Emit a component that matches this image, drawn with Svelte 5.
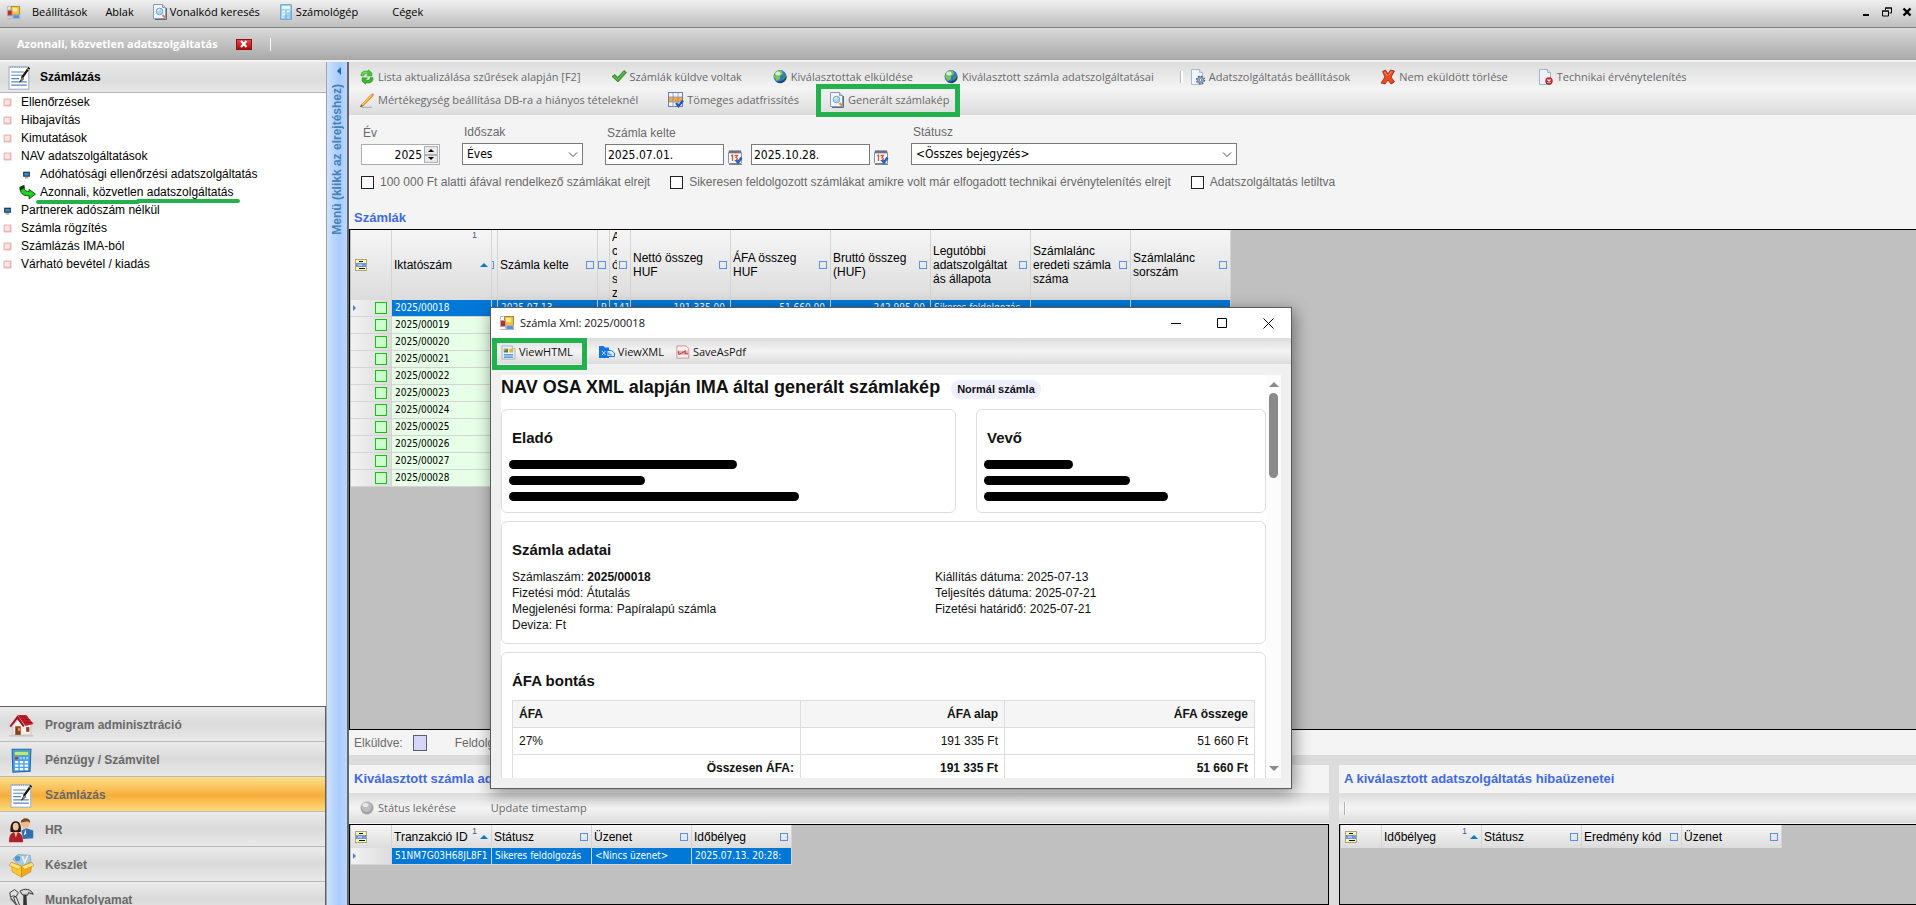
<script>
  const menu = [
    { label: 'Beállítások' },
    { label: 'Ablak' },
    { label: 'Vonalkód keresés', icon: 'search' },
    { label: 'Számológép', icon: 'calc' },
    { label: 'Cégek', wide: true }
  ];

  const tree = [
    { label: 'Ellenőrzések' },
    { label: 'Hibajavítás' },
    { label: 'Kimutatások' },
    { label: 'NAV adatszolgáltatások' },
    { label: 'Adóhatósági ellenőrzési adatszolgáltatás', icon: 'screen', sub: true },
    { label: 'Azonnali, közvetlen adatszolgáltatás', icon: 'arrow', sub: true, marked: true },
    { label: 'Partnerek adószám nélkül', icon: 'screen' },
    { label: 'Számla rögzítés' },
    { label: 'Számlázás IMA-ból' },
    { label: 'Várható bevétel / kiadás' }
  ];

  const modules = [
    { label: 'Program adminisztráció', icon: 'house' },
    { label: 'Pénzügy / Számvitel', icon: 'bluecalc' },
    { label: 'Számlázás', icon: 'notepad' },
    { label: 'HR', icon: 'people' },
    { label: 'Készlet', icon: 'box' },
    { label: 'Munkafolyamat', icon: 'tools' }
  ];
  let current = 'Számlázás';

  const toolbar = [
    [
      { label: 'Lista aktualizálása szűrések alapján [F2]', icon: 'refresh' },
      { label: 'Számlák küldve voltak', icon: 'check' },
      { label: 'Kiválasztottak elküldése', icon: 'globe' },
      { label: 'Kiválasztott számla adatszolgáltatásai', icon: 'globe' },
      { label: 'Adatszolgáltatás beállítások', icon: 'gear', split: true },
      { label: 'Nem eküldött törlése', icon: 'cross' },
      { label: 'Technikai érvénytelenítés', icon: 'docerror' }
    ],
    [
      { label: 'Mértékegység beállítása DB-ra a hiányos tételeknél', icon: 'pencil' },
      { label: 'Tömeges adatfrissítés', icon: 'gridcheck' },
      { label: 'Generált számlakép', icon: 'search', marked: true }
    ]
  ];

  const columns = [
    { label: 'Iktatószám', width: 100, sort: true },
    { label: '', width: 6 },
    { label: 'Számla kelte', width: 100 },
    { label: '', width: 12 },
    { label: 'Acósz', width: 21, narrow: true },
    { label: 'Nettó összeg HUF', width: 100 },
    { label: 'ÁFA összeg HUF', width: 100 },
    { label: 'Bruttó összeg (HUF)', width: 100 },
    { label: 'Legutóbbi adatszolgáltatás állapota', width: 100 },
    { label: 'Számlalánc eredeti számla száma', width: 100 },
    { label: 'Számlalánc sorszám', width: 100 }
  ];
  const first = ['2025/00018', '', '2025.07.13.', 'P', '141', '191 335,00', '51 660,00', '242 995,00', 'Sikeres feldolgozás', '', ''];
  const invoices = [19, 20, 21, 22, 23, 24, 25, 26, 27, 28].map(n => '2025/000' + n);
  const isAmount = i => i >= 5 && i <= 7;

  const transactionCols = ['Tranzakció ID', 'Státusz', 'Üzenet', 'Időbélyeg'];
  const transaction = ['51NM7G03H68JL8F1', 'Sikeres feldolgozás', '<Nincs üzenet>', '2025.07.13. 20:28:'];
  const errorCols = ['Időbélyeg', 'Státusz', 'Eredmény kód', 'Üzenet'];

  const parties = [
    { title: 'Eladó', lines: [228, 136, 290] },
    { title: 'Vevő', lines: [89, 146, 184] }
  ];

  let year = 2025;
</script>

{#snippet icon(name, size = 16)}
  <svg class="icon" width={size} height={size} viewBox="0 0 16 16" aria-hidden="true">
    {#if name === 'app'}
      <rect x="5.500" y="1.500" width="9" height="9" fill="#f4c430" stroke="#9a8a50" />
      <rect x="7" y="3" width="5" height="4" fill="#ffe98a" />
      <rect x="1.500" y="5.500" width="5" height="6" fill="#c62b22" stroke="#a9a9a9" />
      <path d="M1.500 1.500h3M1.500 1.500v3M1.500 14.500h5v-3" fill="none" stroke="#b5b5b5" />
      <rect x="7.500" y="10.500" width="7" height="4" fill="#5b8fe0" stroke="#a9b4c8" />
    {:else if name === 'search'}
      <path d="M1.500 .5h9l3 3v11h-12z" fill="#f2f6fc" stroke="#8a9abb" />
      <path d="M14.500 4v11.500H3" fill="none" stroke="#5c6b88" />
      <path d="M10.500 .5v3h3" fill="#c4d2ea" stroke="#8a9abb" />
      <circle cx="7.500" cy="7.500" r="3.300" fill="#a9daf5" stroke="#7b9fc8" />
      <path d="M5.500 7a2.300 2.300 0 0 1 2.500-1.500" stroke="#fff" fill="none" />
      <path d="M10.500 11l2.500 2.500" stroke="#e58a2e" stroke-width="2.200" />
    {:else if name === 'calc'}
      <path d="M2.500 .5h11v15h-11z" fill="#9ccfee" stroke="#7faccb" />
      <rect x="4" y="2" width="8" height="3" fill="#e4f5ff" />
      <path d="M4 7.500h3M9 7.500h3M4 10.500h3M9 10.500h3M4 13.500h3M9 13.500h3" stroke="#e8f6ff" stroke-width="1.800" />
      <path d="M2.500 15.500L13.500 6v9.500z" fill="#4fa0d8" opacity=".35" />
    {:else if name === 'notepad'}
      <rect x="1.300" y="1.200" width="12.600" height="14.300" fill="#fdfeff" stroke="#9fb3cc" stroke-width=".7" />
      <path d="M2 1.300h11.500" stroke="#7f90a8" stroke-dasharray=".7 .7" stroke-width=".8" />
      <path d="M2.700 4.500h8M2.700 6.600h7M2.700 8.700h5M2.700 10.800h10M2.700 12.900h10" stroke="#5d84b8" stroke-width=".7" />
      <path d="M14.200 1.700L9.500 8.200" stroke="#111" stroke-width="1.500" />
      <path d="M9.700 8L8 11l2.700-2z" fill="#e8b63a" stroke="#222" stroke-width=".5" />
      <path d="M12.800 2.300l1.500 1" stroke="#d8a825" stroke-width=".7" />
    {:else if name === 'refresh'}
      <path d="M2 7C1.500 3.500 4 1.500 8 2h1.500V.8L13 4v3H7.500l1.800-1.800C7 4.300 5 5 4.800 7z" fill="#4cc436" stroke="#2a9a24" stroke-width=".5" />
      <path d="M14 8.500c.5 4-2 5.800-6 5.500H6.500v1.300L3 12V8.800h5.500l-1.800 2c2.300 1 4.300.2 4.500-2.300z" fill="#3fb52c" stroke="#1f8a1c" stroke-width=".5" />
      <path d="M3 6c.3-2 2-3 5-2.800" fill="none" stroke="#9be78a" stroke-width=".8" />
    {:else if name === 'check'}
      <path d="M1 7.500l3-2 2.700 2.800L13 1.500l2.500 2L7 13z" fill="#3fa535" stroke="#2a7d24" stroke-width=".7" />
      <path d="M3 7.500l3.700 3L13.500 3" stroke="#6cc75c" fill="none" />
    {:else if name === 'globe'}
      <circle cx="8" cy="7.500" r="6.500" fill="#2f78c8" />
      <path d="M3 4c2-2.500 5-3 7-2l1 3-3 2v3l-3 2-3-4z" fill="#7cc553" />
      <path d="M11 8l3-1c.5 3-1 5-3 6z" fill="#4f9d3a" />
      <path d="M14.500 6.500a6.500 6.500 0 0 1-11 5.800c5 1.200 9-1 11-5.800z" fill="#0d2a5c" opacity=".7" />
      <ellipse cx="6" cy="4.500" rx="2.700" ry="1.900" fill="#e9f7e9" opacity=".8" />
    {:else if name === 'gear'}
      <path d="M1.500 .5h8l3 3v12h-11z" fill="#f3f7fd" stroke="#a8bad2" />
      <path d="M9.500 .5v3h3" fill="#d4dfef" stroke="#a8bad2" />
      <circle cx="10.500" cy="11" r="3.900" fill="#c5d4e6" stroke="#4d6482" stroke-width="1.400" stroke-dasharray="1.600 1.460" />
      <circle cx="10.500" cy="11" r="3" fill="#b9cadf" stroke="#5b7392" stroke-width=".9" />
      <circle cx="10.500" cy="11" r="1.300" fill="#fff" stroke="#4d6482" stroke-width=".8" />
    {:else if name === 'cross'}
      <path d="M2.500 2.500L5.500 1 8 5l2.500-4 4 1L11 8l3.500 5-3.500 2L8 11l-3 4-4-1 4-6z" fill="#ee4a22" stroke="#8d2412" stroke-width=".8" />
      <path d="M4.500 3l3 4M11.500 2.500L9 6" stroke="#ff9a70" />
    {:else if name === 'docerror'}
      <path d="M1.500 .5h8l3 3v12h-11z" fill="#eef3fb" stroke="#9fb3cc" />
      <path d="M9.500 .5v3h3" fill="#d4dfef" stroke="#9fb3cc" />
      <circle cx="11" cy="12" r="3.700" fill="#b8262c" />
      <path d="M9.500 10.500l3 3M12.500 10.500l-3 3" stroke="#fff" stroke-width="1.400" />
    {:else if name === 'pencil'}
      <path d="M2.500 12.800L12 2.500l2 1.500L4 14.200z" fill="#f6a733" stroke="#c77a1c" stroke-width=".6" />
      <path d="M3.500 12.500L12.500 3" stroke="#ffd68a" stroke-width=".8" />
      <path d="M12 2.800l1.500-1.600L15.500 2.700 14 4.300z" fill="#e58c8c" />
      <path d="M2.300 12.800L.8 15 3.800 14.300z" fill="#4a3826" />
      <path d="M2 15.300h11" stroke="#9a9a9a" stroke-width=".8" />
    {:else if name === 'gridcheck'}
      <rect x=".5" y=".5" width="14" height="14" fill="#f4f7fd" stroke="#6a7fa8" />
      <rect x="1" y="5" width="13" height="5" fill="#f4a640" />
      <path d="M5 1v13M10 1v13M1 5h13M1 10h13" stroke="#8493b5" stroke-width=".8" />
      <path d="M8 11l2.500 3.200L15 8.500" fill="none" stroke="#1d55b8" stroke-width="2.200" />
    {:else if name === 'calendar'}
      <rect x="1.500" y="2.500" width="13" height="12" rx="1" fill="#fafcff" stroke="#7c8fb4" />
      <path d="M2 2.500h12v2H2z" fill="#8e9dbb" />
      <path d="M3 1v3M5 1v3M7 1v3M9 1v3M11 1v3M13 1v3" stroke="#444" stroke-width=".9" />
      <path d="M4 7l1.500-.8V12M7.500 6.500h3L9 8.700c2 0 2 3-1.500 3" fill="none" stroke="#e0552a" stroke-width="1.300" />
      <path d="M9 11l2 2.500 3.500-5" fill="none" stroke="#2560c2" stroke-width="2.400" />
      <path d="M2 15.300h13" stroke="#666" />
    {:else if name === 'screen'}
      <rect x="2" y="3" width="12" height="9" fill="#23313d" />
      <rect x="4" y="5" width="8" height="5" fill="#2f8fd6" />
      <path d="M5 14h6" stroke="#8a8a8a" stroke-width="2" />
    {:else if name === 'pink'}
      <rect x="1" y="1" width="14" height="14" fill="#e8b4b4" />
      <rect x="3" y="3" width="9" height="9" fill="#fbe6e6" />
    {:else if name === 'arrow'}
      <path d="M1 3l3.500-1.500c0 4 1 5.500 5 5.500V5L15.500 9.500 9.500 14v-3C3.500 11.500 1 8.500 1 3z" fill="#21d321" stroke="#0a4d0a" stroke-width=".9" />
      <path d="M.5 3L5 1l.5 3L1 6z" fill="#0d3d0d" />
    {:else if name === 'house'}
      <path d="M2.500 8L6 4l8 3v7H2.500z" fill="#f1efec" stroke="#bdb6ae" stroke-width=".4" />
      <path d="M.3 8.500L5.500 1.500 7.500 4.500 10 8.300 9 9 5.300 4 1.300 9z" fill="#a31420" />
      <path d="M5.500 1.200h5.500L15.700 7l-5.200 1.300z" fill="#c81f2d" />
      <path d="M6.800 2.700h5.400M8 4.300h5.600M9 6h6" stroke="#7d0c16" stroke-width=".4" />
      <rect x="4" y="8.500" width="3.500" height="5.500" fill="#8a3f1e" />
      <rect x="5.800" y="9.500" width="1.200" height="2" fill="#e9a13a" />
      <rect x="11" y="9" width="2" height="3" fill="#8a3f1e" />
      <path d="M0 14.600h15.500" stroke="#c7c7c7" />
    {:else if name === 'bluecalc'}
      <path d="M2 .8h12l-.5 14L2.500 15.500z" fill="#4aa0e6" stroke="#1f66ad" stroke-width=".7" />
      <rect x="3.500" y="2.200" width="9" height="2.600" fill="#b9e88a" stroke="#4a8f34" stroke-width=".3" />
      <path d="M3.800 6.500h2" stroke="#d62a2a" stroke-width="1.500" />
      <path d="M6.800 6.500h5.600" stroke="#a8cdf0" stroke-width="1.500" stroke-dasharray="1.300 .8" />
      <path d="M3.800 9h8.600M3.800 11.300h8.600M3.800 13.500h8.600" stroke="#f3faff" stroke-width="1.500" stroke-dasharray="2.200 .9" />
    {:else if name === 'people'}
      <circle cx="10.500" cy="3.500" r="2.800" fill="#f0b98a" />
      <path d="M7.500 3c0-3.500 6-4 6.200 0-2-1.500-4-.5-6.200 0z" fill="#7b4a20" />
      <path d="M8 8l3-1.500L15.500 8v5L9 13.500z" fill="#2f6fae" />
      <path d="M10.500 7l-1 4 1.500-1z" fill="#fff" />
      <path d="M1 9c-.5-4 .5-7 3.300-7S8 5 7.500 9z" fill="#2a1712" />
      <ellipse cx="4.300" cy="5.500" rx="1.900" ry="2.500" fill="#f3c49c" />
      <path d="M0 15.500c0-5 1.500-6.500 4.300-6.500S9 10.500 9 15.500z" fill="#b0202c" />
      <path d="M3.300 9l1.100 3.500L5.500 9z" fill="#f3c49c" />
    {:else if name === 'box'}
      <path d="M2.500 4l3-3 8 .5.5 4-6 4z" fill="#a9c9df" stroke="#6f8ca2" stroke-width=".4" />
      <circle cx="5.500" cy="3.500" r="1.700" fill="#4d9ad0" />
      <path d="M8.500 2l1.500 4 2-4.500" stroke="#e9eef2" fill="none" />
      <path d="M1.500 6L8 8.500v7L2 12z" fill="#f9c733" stroke="#c98d13" stroke-width=".4" />
      <path d="M14.500 6L8 8.500v7l6-3.500z" fill="#f0a822" stroke="#c98d13" stroke-width=".4" />
      <path d="M1.500 6L0 8l6 2.500L8 8.500zM14.500 6L16 8l-6 2.500L8 8.500z" fill="#ffe27a" stroke="#c98d13" stroke-width=".4" />
    {:else if name === 'tools'}
      <path d="M7 2c3-2 7-1.500 8.500 2l-3-1-.5 1.500H8.800z" fill="#d9d9d9" stroke="#222" stroke-width=".6" />
      <path d="M9.200 4.500h2l.5 11.500H9z" fill="#333" />
      <path d="M.5 3l3-2 2.500 2-1.500 2.500-2-.5-1.500 1zM4.500 5.500L8 14l-2 1L3 6z" fill="#e2e2e2" stroke="#333" stroke-width=".6" />
      <path d="M1 6.500L6 12" stroke="#555" />
    {:else if name === 'sphere'}
      <circle cx="8" cy="8" r="6.500" fill="#a2a2a2" />
      <circle cx="7.500" cy="7" r="5" fill="#bdbdbd" />
      <ellipse cx="6.500" cy="5" rx="3" ry="2" fill="#e6e6e6" />
    {:else if name === 'html'}
      <path d="M1 1h11l3 3v11H1z" fill="#e8f2fa" stroke="#a2b4c4" />
      <path d="M12 1v3h3" fill="#fff" stroke="#a2b4c4" />
      <rect x="3" y="4" width="4.500" height="4" fill="#5c7f3c" />
      <rect x="3" y="4" width="2" height="2" fill="#e2b52c" />
      <rect x="9" y="4" width="4" height="4" fill="#e2b52c" />
      <path d="M3 10.500h10M3 13h10" stroke="#3f84c4" stroke-width="1.400" />
    {:else if name === 'xml'}
      <path d="M0 2h4.500l1.500 1.500H10V14H0z" fill="#1673e6" />
      <path d="M3 7l3.500 4M6.500 7L3 11" stroke="#cfe4ff" stroke-width=".9" />
      <path d="M8 6.500h4.500l3 2.500v3.500H8z" fill="#d8ebff" stroke="#1673e6" />
      <path d="M9.800 8.500v2.300h3" stroke="#1673e6" fill="none" />
    {:else if name === 'pdf'}
      <path d="M1 1h10.500l3 3v11H1z" fill="#fbeeee" stroke="#c88a8a" />
      <path d="M1 6.500h13.500v4.500H1z" fill="#e6b2b2" />
      <path d="M3 11c3.500-1.500 4.500-3 7.500-3.500M10.500 6v4h3" fill="none" stroke="#b84444" stroke-width="1.200" />
      <path d="M3 7v3" stroke="#b84444" stroke-width="1.200" />
    {/if}
  </svg>
{/snippet}

{#snippet corner()}
  <svg class="icon" width="12" height="12" viewBox="0 0 12 12" aria-hidden="true">
    <rect x=".5" y=".5" width="11" height="11" fill="#ffff9c" stroke="#a8a482" />
    <rect x="1" y="4" width="10" height="4" fill="#6f93f2" />
    <path d="M4 2.500h4M4 9.500h6" stroke="#111" />
    <path d="M3 6h4" stroke="#dfe8ff" />
  </svg>
{/snippet}

{#snippet smallGrid(cols, row)}
  <table class="data small">
    <colgroup>
      <col class="c-head" />
      {#each cols as col}<col class="c-std" />{/each}
    </colgroup>
    <thead>
      <tr>
        <th class="corner">{@render corner()}</th>
        {#each cols as col, i}
          <th>
            <div class="head">
              <span class="caption">{col}</span>
              {#if i === 0}
                <span class="order">1</span><span class="up"></span>
              {:else}
                <span class="pin"></span>
              {/if}
            </div>
          </th>
        {/each}
      </tr>
    </thead>
    {#if row}
      <tbody>
        <tr class="selected">
          <td class="row-head"><span class="pointer"></span></td>
          {#each row as value}<td>{value}</td>{/each}
        </tr>
      </tbody>
    {/if}
  </table>
{/snippet}

<div class="app">
  <header class="menubar">
    {@render icon('app', 15)}
    <nav>
      {#each menu as item}
        <button class:wide={item.wide}>
          {#if item.icon}{@render icon(item.icon)}{/if}{item.label}
        </button>
      {/each}
    </nav>
    <div class="mdi">
      <button aria-label="Kis méret"><svg width="10" height="10"><path d="M1 8h6" stroke="#000" stroke-width="2" /></svg></button>
      <button aria-label="Előző méret">
        <svg width="10" height="10"><path d="M3.500 3V1h6v5H7.500M3 1h7M.5 4h6v5h-6zM0 4h7" fill="none" stroke="#000" /></svg>
      </button>
      <button aria-label="Bezárás"><svg width="10" height="10"><path d="M1.500 1.500l7 7M8.500 1.500l-7 7" stroke="#000" stroke-width="2.400" /></svg></button>
    </div>
  </header>

  <div class="tabs">
    <span class="tab">Azonnali, közvetlen adatszolgáltatás</span>
    <button class="close-tab" aria-label="Lap bezárása">
      <svg width="8" height="8"><path d="M1 1l5.500 6M6.500 1L1 7" stroke="#fff" stroke-width="2" /></svg>
    </button>
    <span class="tab-end"></span>
  </div>

  <div class="body">
    <aside>
      <h2>{@render icon('notepad', 25)}Számlázás</h2>
      <ul class="tree">
        {#each tree as item}
          <li class:sub={item.sub} class:marked={item.marked}>
            {@render icon(item.icon || 'pink', item.icon === 'arrow' ? 17 : 9)}
            <a href="#tree">{item.label}</a>
            {#if item.marked}
              <svg class="underline" width="208" height="8" aria-hidden="true">
                <path d="M3 5h100M103 4h100" stroke="#22b14c" stroke-width="4" stroke-linecap="round" />
              </svg>
            {/if}
          </li>
        {/each}
      </ul>
      <div class="modules">
        {#each modules as item}
          <button class:active={current === item.label} on:click={() => (current = item.label)}>
            {@render icon(item.icon, 25)}{item.label}
          </button>
        {/each}
      </div>
    </aside>

    <button class="strip">
      <span class="left"></span>
      <span class="strip-text">Menü (klikk az elrejtéshez)</span>
    </button>

    <main>
      <div class="toolbar">
        {#each toolbar as row}
          <div class="tool-row">
            {#each row as item}
              <button class:split={item.split} class:marked={item.marked}>
                {@render icon(item.icon)}{item.label}
              </button>
            {/each}
          </div>
        {/each}
      </div>

      <section class="filters">
        <div class="fields">
          <div class="field">
            <label for="year">Év</label>
            <div class="spin">
              <input id="year" type="number" bind:value={year} />
              <div class="spin-buttons">
                <button aria-label="Növelés" on:click={() => year++}><span class="up"></span></button>
                <button aria-label="Csökkentés" on:click={() => year--}><span class="down"></span></button>
              </div>
            </div>
          </div>
          <div class="field">
            <label for="period">Időszak</label>
            <div class="select period">
              <select id="period"><option>Éves</option></select>
              <svg width="10" height="6"><path d="M1 .5l4 4 4-4" fill="none" stroke="#444" /></svg>
            </div>
          </div>
          <div class="field">
            <label for="from">Számla kelte</label>
            <div class="dates">
              <input id="from" type="text" value="2025.07.01." />
              <button aria-label="Naptár">{@render icon('calendar')}</button>
              <input aria-label="Számla kelte vége" type="text" value="2025.10.28." />
              <button aria-label="Naptár">{@render icon('calendar')}</button>
            </div>
          </div>
          <div class="field">
            <label for="status">Státusz</label>
            <div class="select status">
              <select id="status"><option>&lt;Összes bejegyzés&gt;</option></select>
              <svg width="10" height="6"><path d="M1 .5l4 4 4-4" fill="none" stroke="#444" /></svg>
            </div>
          </div>
        </div>
        <div class="checks">
          <label><input type="checkbox" />100 000 Ft alatti áfával rendelkező számlákat elrejt</label>
          <label><input type="checkbox" />Sikeresen feldolgozott számlákat amikre volt már elfogadott technikai érvénytelenítés elrejt</label>
          <label><input type="checkbox" />Adatszolgáltatás letiltva</label>
        </div>
        <h3>Számlák</h3>
      </section>

      <div class="grid-area">
        <table class="data invoices">
          <colgroup>
            <col class="c-head" />
            {#each columns as col}<col style="width: {col.width}px" />{/each}
          </colgroup>
          <thead>
            <tr>
              <th class="corner">{@render corner()}</th>
              {#each columns as col}
                <th>
                  <div class="head" class:narrow={col.narrow}>
                    {#if col.label}<span class="caption">{col.label}</span>{/if}
                    {#if col.sort}
                      <span class="order">1</span><span class="up"></span>
                    {:else}
                      <span class="pin"></span>
                    {/if}
                  </div>
                </th>
              {/each}
            </tr>
          </thead>
          <tbody>
            <tr class="selected">
              <td class="row-head"><span class="pointer"></span><input type="checkbox" aria-label="Kijelölés" /></td>
              {#each first as value, i}<td class:amount={isAmount(i)}>{value}</td>{/each}
            </tr>
            {#each invoices as number}
              <tr>
                <td class="row-head"><input type="checkbox" aria-label="Kijelölés" /></td>
                <td>{number}</td>
                {#each columns.slice(1) as col}<td></td>{/each}
              </tr>
            {/each}
          </tbody>
        </table>
      </div>

      <div class="legend">
        Elküldve:<span class="swatch"></span>Feldolgozva:
      </div>

      <div class="bottom">
        <section class="transactions">
          <h3>Kiválasztott számla adatszolgáltatásai</h3>
          <div class="tool-row">
            <button>{@render icon('sphere')}Státus lekérése</button>
            <button>Update timestamp</button>
          </div>
          <div class="grid-area">{@render smallGrid(transactionCols, transaction)}</div>
        </section>
        <section class="errors">
          <h3>A kiválasztott adatszolgáltatás hibaüzenetei</h3>
          <div class="tool-row"><span class="bar"></span></div>
          <div class="grid-area">{@render smallGrid(errorCols, null)}</div>
        </section>
      </div>
    </main>
  </div>

  <div class="dialog" role="dialog" aria-label="Számla Xml">
    <div class="title">
      {@render icon('app', 16)}
      <span>Számla Xml: 2025/00018</span>
      <button aria-label="Kis méret"><svg width="11" height="11"><path d="M0 5.500h10" stroke="#000" /></svg></button>
      <button aria-label="Teljes méret"><svg width="11" height="11"><path d="M.5 .5h9v9h-9z" fill="none" stroke="#000" /></svg></button>
      <button aria-label="Bezárás"><svg width="11" height="11"><path d="M.5 .5l10 10M10.500 .5l-10 10" stroke="#000" /></svg></button>
    </div>
    <div class="dialog-tools">
      <button class="marked">{@render icon('html', 15)}ViewHTML</button>
      <button>{@render icon('xml')}ViewXML</button>
      <button>{@render icon('pdf', 14)}SaveAsPdf</button>
    </div>
    <div class="browser">
      <div class="doc">
        <h1>NAV OSA XML alapján IMA által generált számlakép <span class="badge">Normál számla</span></h1>
        <div class="parties">
          {#each parties as party}
            <div class="card">
              <h4>{party.title}</h4>
              {#each party.lines as width}
                <div class="redacted" style="width: {width}px"></div>
              {/each}
            </div>
          {/each}
        </div>
        <div class="card">
          <h4>Számla adatai</h4>
          <div class="details">
            <div>
              Számlaszám: <b>2025/00018</b><br />
              Fizetési mód: Átutalás<br />
              Megjelenési forma: Papíralapú számla<br />
              Deviza: Ft
            </div>
            <div>
              Kiállítás dátuma: 2025-07-13<br />
              Teljesítés dátuma: 2025-07-21<br />
              Fizetési határidő: 2025-07-21
            </div>
          </div>
        </div>
        <div class="card">
          <h4>ÁFA bontás</h4>
          <table class="vat">
            <thead>
              <tr><th>ÁFA</th><th>ÁFA alap</th><th>ÁFA összege</th></tr>
            </thead>
            <tbody>
              <tr><td>27%</td><td>191 335 Ft</td><td>51 660 Ft</td></tr>
              <tr class="total"><td>Összesen ÁFA:</td><td>191 335 Ft</td><td>51 660 Ft</td></tr>
            </tbody>
          </table>
        </div>
      </div>
      <div class="scrollbar">
        <span class="up"></span>
        <span class="thumb"></span>
        <span class="down"></span>
      </div>
    </div>
  </div>
</div>

<style>
  :global(body) {
    margin: 0;
  }

  .app {
    --ui: 'Open Sans', 'Noto Sans', sans-serif;
    --cell: 'DejaVu Sans Condensed', 'DejaVu Sans', sans-serif;
    --gray: #696969;
    position: relative;
    display: flex;
    flex-direction: column;
    height: 100vh;
    overflow: hidden;
    background: #f4f4f4;
    font: 12px/16px 'Liberation Sans', Arial, sans-serif;
    color: #000;
  }

  .app :global(*) {
    box-sizing: border-box;
  }

  button {
    display: flex;
    align-items: center;
    padding: 0;
    border: 0;
    background: none;
    font: inherit;
    color: inherit;
    white-space: nowrap;
  }

  h1, h2, h3, h4, ul {
    margin: 0;
    padding: 0;
  }

  .icon {
    flex: none;
    display: block;
  }

  /* menu and tabs */
  .menubar {
    display: flex;
    align-items: center;
    height: 28px;
    padding: 0 4px 3px 6px;
    border-bottom: 1px solid #808080;
    background: linear-gradient(#f0f0f0, #bebebe);
    font-family: var(--ui);
    font-size: 11px;
  }

  .menubar nav {
    display: flex;
    flex: 1;
    gap: 18px;
    margin-left: 11px;
  }

  .menubar nav button {
    gap: 2px;
  }

  .menubar nav .wide {
    margin-left: 16px;
  }

  .mdi {
    display: flex;
    gap: 10px;
  }

  .tabs {
    display: flex;
    align-items: center;
    height: 34px;
    padding-left: 17px;
    border-bottom: 2px solid #f2f2f2;
    background: linear-gradient(#dadada, #a8a8a8);
  }

  .tab {
    color: #fff;
    font: bold 11px/16px var(--ui);
  }

  .close-tab {
    justify-content: center;
    width: 16px;
    height: 11px;
    margin: 0 18px;
    border: 1px solid #8c1014;
    background: linear-gradient(#e04a44, #b00c10);
  }

  .tab-end {
    width: 1px;
    height: 13px;
    background: #fff;
  }

  .body {
    display: flex;
    flex: 1;
    min-height: 0;
  }

  /* sidebar */
  aside {
    display: flex;
    flex-direction: column;
    flex: none;
    width: 327px;
    border-right: 1px solid #a0a0a0;
    background: #fff;
  }

  h2 {
    display: flex;
    align-items: center;
    gap: 8px;
    height: 31px;
    padding-left: 7px;
    border-bottom: 1px solid #b4b4b4;
    background: linear-gradient(#e8e8e8, #dcdcdc 60%, #e8e8e8);
    font-size: 12px;
  }

  .tree {
    flex: 1;
    list-style: none;
  }

  .tree li {
    position: relative;
    display: flex;
    align-items: center;
    gap: 9px;
    height: 18px;
    padding-left: 3px;
  }

  .tree .sub {
    padding-left: 22px;
  }

  .tree .marked {
    gap: 4px;
    padding-left: 19px;
  }

  .tree a {
    color: #000;
    text-decoration: none;
  }

  .underline {
    position: absolute;
    left: 35px;
    bottom: -4px;
  }

  .modules {
    flex: 0 0 199px;
    overflow: hidden;
    border-top: 1px solid #606060;
    border-right: 1px solid #606060;
  }

  .modules button {
    gap: 11px;
    width: 100%;
    height: 35px;
    padding: 2px 0 0 9px;
    border-bottom: 1px solid #b8b8b8;
    background: linear-gradient(#ebebeb, #dadada 50%, #e9e9e9);
    color: var(--gray);
    font-weight: bold;
  }

  .modules .active {
    background: linear-gradient(#fde08a, #f7ae3c 55%, #fddb7c);
  }

  .strip {
    flex: none;
    flex-direction: column;
    gap: 9px;
    width: 22px;
    padding-top: 5px;
    border-right: 2px solid #666;
    background: linear-gradient(90deg, #cfe2ff, #a9ccff 60%, #b9d5ff);
    color: #4682b4;
    font-weight: bold;
  }

  .strip .left {
    margin-left: 4px;
    border: 4px solid transparent;
    border-right-color: #0a6fb8;
    border-left: 0;
  }

  .strip-text {
    writing-mode: vertical-rl;
    transform: rotate(180deg);
  }

  /* main area */
  main {
    display: flex;
    flex-direction: column;
    flex: 1;
    min-width: 0;
  }

  .toolbar {
    padding: 3px 0 4px;
    background: linear-gradient(#dcdcdc, #f4f4f4 50%, #dcdcdc);
  }

  .tool-row {
    display: flex;
    gap: 30px;
    height: 23px;
    padding-left: 10px;
    color: var(--gray);
    font-family: var(--ui);
    font-size: 11px;
  }

  .tool-row button {
    position: relative;
    gap: 3px;
  }

  .tool-row .split {
    margin-left: -4px;
    padding-left: 10px;
  }

  .tool-row .split::before {
    content: '';
    position: absolute;
    left: 0;
    width: 2px;
    height: 12px;
    border-left: 1px solid #b8b8b8;
    background: #fff;
  }

  .tool-row .marked::after,
  .dialog-tools .marked::after {
    content: '';
    position: absolute;
    inset: -4px -10px -6px -13px;
    border: 5px solid #22b14c;
  }

  .filters {
    padding: 9px 12px 3px;
    color: var(--gray);
  }

  .fields {
    display: flex;
    align-items: flex-end;
    gap: 22px;
  }

  .field {
    display: flex;
    flex-direction: column;
    gap: 3px;
  }

  .field label {
    padding-left: 2px;
  }

  .fields input,
  .fields select {
    height: 21px;
    padding: 0 2px;
    border: 1px solid #7a7a7a;
    border-radius: 0;
    outline: 0;
    background: #fff;
    color: #000;
    font: 12px/16px var(--cell);
  }

  .spin {
    display: flex;
    width: 79px;
    height: 21px;
    border: 1px solid #abadb3;
    background: #fff;
  }

  .spin input {
    flex: 1;
    min-width: 0;
    height: 19px;
    border: 0;
    text-align: right;
    appearance: textfield;
  }

  .spin input::-webkit-inner-spin-button {
    display: none;
  }

  .spin-buttons {
    display: flex;
    flex-direction: column;
    width: 15px;
    padding: 1px 1px 1px 0;
  }

  .spin-buttons button {
    flex: 1;
    justify-content: center;
    border: 1px solid #b0b0b0;
    background: #e8e8e8;
  }

  .select {
    position: relative;
  }

  .select svg {
    position: absolute;
    right: 5px;
    top: 9px;
  }

  .fields select {
    display: block;
    width: 100%;
    height: 22px;
    padding: 0 4px;
    appearance: none;
  }

  .period {
    width: 121px;
  }

  .status {
    width: 326px;
  }

  .dates {
    display: flex;
    align-items: flex-end;
    gap: 3px;
  }

  .dates input {
    width: 119px;
  }

  .dates button + input {
    margin-left: 5px;
  }

  .checks {
    display: flex;
    gap: 20px;
    margin-top: 9px;
  }

  .checks label {
    display: flex;
    align-items: center;
    gap: 6px;
  }

  input[type='checkbox'] {
    appearance: none;
    width: 13px;
    height: 13px;
    margin: 0;
    border: 1px solid #222;
    background: #fff;
  }

  h3 {
    color: #4169e1;
    font-size: 13px;
    line-height: 16px;
    white-space: nowrap;
  }

  .filters h3 {
    margin: 20px 0 0 -7px;
  }

  .grid-area {
    flex: 1;
    min-height: 0;
    overflow: hidden;
    padding-left: 1px;
    border: 1px solid #000;
    border-right: 0;
    background: #c0c0c0;
  }

  .data {
    table-layout: fixed;
    width: 441px;
    border-collapse: separate;
    border-spacing: 0;
  }

  .invoices {
    width: 880px;
  }

  .c-head {
    width: 41px;
  }

  .c-std {
    width: 100px;
  }

  .data th {
    height: 23px;
    padding: 0;
    overflow: hidden;
    border-right: 1px solid #d4d4d4;
    background: linear-gradient(#f6f6f6, #dcdcdc);
    font-weight: normal;
    text-align: left;
    line-height: 14px;
  }

  .invoices th {
    height: 68px;
  }

  .data .corner {
    padding-left: 4px;
  }

  .head {
    position: relative;
    display: flex;
    align-items: center;
    justify-content: flex-end;
    gap: 7px;
    padding: 0 3px 0 2px;
  }

  .caption {
    flex: 1;
    word-break: break-word;
  }

  .small .head {
    gap: 2px;
  }

  .small .caption {
    white-space: nowrap;
  }

  .narrow {
    gap: 2px;
  }

  .narrow .caption {
    flex: 0 0 5px;
    overflow: hidden;
    word-break: break-all;
  }

  .head .order {
    position: absolute;
    right: 14px;
    top: -30px;
    color: #44607c;
    font-size: 9px;
  }

  .small .head .order {
    top: -6px;
  }

  .pin {
    flex: none;
    width: 8px;
    height: 8px;
    border: 1px solid #5b8fe8;
  }

  .up,
  .down {
    flex: none;
    border: 4px solid transparent;
    border-top: 0;
    border-bottom-color: #0a7ab8;
  }

  .down {
    border-top: 4px solid #0a7ab8;
    border-bottom: 0;
  }

  .spin-buttons .up,
  .spin-buttons .down {
    border-width: 0 3px 3px;
    border-bottom-color: #000;
  }

  .spin-buttons .down {
    border-width: 3px 3px 0;
    border-top-color: #000;
  }

  .data td {
    height: 17px;
    padding: 0 2px 0 3px;
    overflow: hidden;
    border-right: 1px solid #d4d4d4;
    border-bottom: 1px solid #d4d4d4;
    background: #e6ffe6;
    font: 10px/14px var(--cell);
    white-space: nowrap;
  }

  .data .selected td {
    background: #0078d7;
    color: #fff;
  }

  .data .amount {
    padding-right: 5px;
    text-align: right;
  }

  .data .row-head,
  .data .selected .row-head {
    position: relative;
    padding: 0 4px 0 0;
    background: linear-gradient(90deg, #f2f2f2, #dcdcdc);
    text-align: right;
  }

  .row-head input[type='checkbox'] {
    display: block;
    width: 12px;
    height: 12px;
    margin-left: auto;
    border-color: #12c412;
    background: #ccffcc;
  }

  .pointer {
    position: absolute;
    left: 2px;
    top: 5px;
    border: 3px solid transparent;
    border-left-color: #4a7fe0;
    border-right: 0;
  }

  .legend {
    display: flex;
    align-items: center;
    height: 25px;
    padding-left: 5px;
    color: var(--gray);
  }

  .swatch {
    width: 14px;
    height: 16px;
    margin: 0 28px 0 10px;
    border: 1px solid #606060;
    background: #d6d6f8;
  }

  .bottom {
    display: flex;
    gap: 10px;
    height: 150px;
    border-top: 10px solid #dcdcdc;
    background: #dcdcdc;
  }

  .bottom section {
    display: flex;
    flex-direction: column;
    min-width: 0;
    background: #f4f4f4;
  }

  .transactions {
    flex: 980;
  }

  .errors {
    flex: 577;
  }

  .transactions .grid-area {
    border-right: 1px solid #000;
  }

  .bottom h3 {
    padding: 6px 5px;
  }

  .bottom .tool-row {
    align-items: center;
    height: 30px;
    margin-bottom: 1px;
    background: linear-gradient(#dcdcdc, #f4f4f4 50%, #dcdcdc);
  }

  .bottom .tool-row button + button {
    margin-left: 5px;
  }

  .bar {
    width: 2px;
    height: 13px;
    margin-left: -5px;
    border-left: 1px solid #b0b0b0;
    background: #fff;
  }

  /* invoice window */
  .dialog {
    position: absolute;
    left: 490px;
    top: 307px;
    display: flex;
    flex-direction: column;
    width: 802px;
    height: 482px;
    border: 1px solid #5a5a5a;
    background: #f0f0f0;
    box-shadow: 2px 4px 16px rgba(0, 0, 0, 0.45);
    color: #111;
  }

  .title {
    display: flex;
    align-items: center;
    height: 30px;
    padding-left: 8px;
    background: #fff;
    font-family: var(--ui);
    font-size: 11px;
  }

  .title span {
    flex: 1;
    margin-left: 5px;
  }

  .title button {
    justify-content: center;
    width: 46px;
    height: 29px;
  }

  .dialog-tools {
    display: flex;
    height: 26px;
    padding: 2px 0 0 10px;
    background: linear-gradient(#dcdcdc, #f4f4f4 50%, #dcdcdc);
    font-family: var(--ui);
    font-size: 11px;
  }

  .dialog-tools button {
    position: relative;
    gap: 3px;
    margin-right: 12px;
  }

  .dialog-tools .marked {
    margin-right: 26px;
  }

  .dialog-tools .marked::after {
    inset: -2px -14px -6px -9px;
  }

  .browser {
    display: flex;
    flex: 1;
    min-height: 0;
    margin: 11px 10px 10px;
    background: #fff;
  }

  .doc {
    flex: 1;
    overflow: hidden;
  }

  h1 {
    display: flex;
    align-items: center;
    gap: 11px;
    height: 34px;
    padding-bottom: 10px;
    font-size: 18px;
    line-height: 24px;
  }

  .badge {
    margin-top: 4px;
    padding: 0 6px;
    border-radius: 9px;
    background: #eeeeff;
    font-size: 11px;
    line-height: 19px;
  }

  .parties {
    display: grid;
    grid-template-columns: 455fr 290fr;
    gap: 20px;
  }

  .parties .card {
    height: 104px;
  }

  .card {
    margin-bottom: 8px;
    padding: 19px 10px 10px;
    border: 1px solid #ddd;
    border-radius: 6px;
  }

  h4 {
    padding-bottom: 10px;
    font-size: 15px;
    line-height: 18px;
  }

  .redacted {
    height: 9px;
    margin: 3px 0 7px -3px;
    border-radius: 5px;
    background: #000;
  }

  .details {
    display: grid;
    grid-template-columns: 1fr 320px;
  }

  .vat {
    width: 100%;
    border-collapse: collapse;
    table-layout: fixed;
  }

  .vat th,
  .vat td {
    height: 27px;
    padding: 0 6px;
    border: 1px solid #ddd;
    text-align: right;
  }

  .vat th:nth-child(2) {
    width: 204px;
  }

  .vat th:last-child {
    width: 250px;
  }

  .vat th:first-child,
  .vat td:first-child {
    text-align: left;
  }

  .vat th {
    background: #f5f5f5;
  }

  .vat .total td {
    font-weight: bold;
    text-align: right;
  }

  .scrollbar {
    display: flex;
    flex-direction: column;
    align-items: center;
    width: 15px;
    padding: 7px 0;
    background: #fcfcfc;
  }

  .scrollbar .up {
    border-width: 0 5px 5px;
    border-bottom-color: #8a8a8a;
  }

  .scrollbar .down {
    margin-top: auto;
    border-width: 5px 5px 0;
    border-top-color: #8a8a8a;
  }

  .thumb {
    width: 9px;
    height: 85px;
    margin-top: 6px;
    border-radius: 5px;
    background: #8a8a8a;
  }
</style>
